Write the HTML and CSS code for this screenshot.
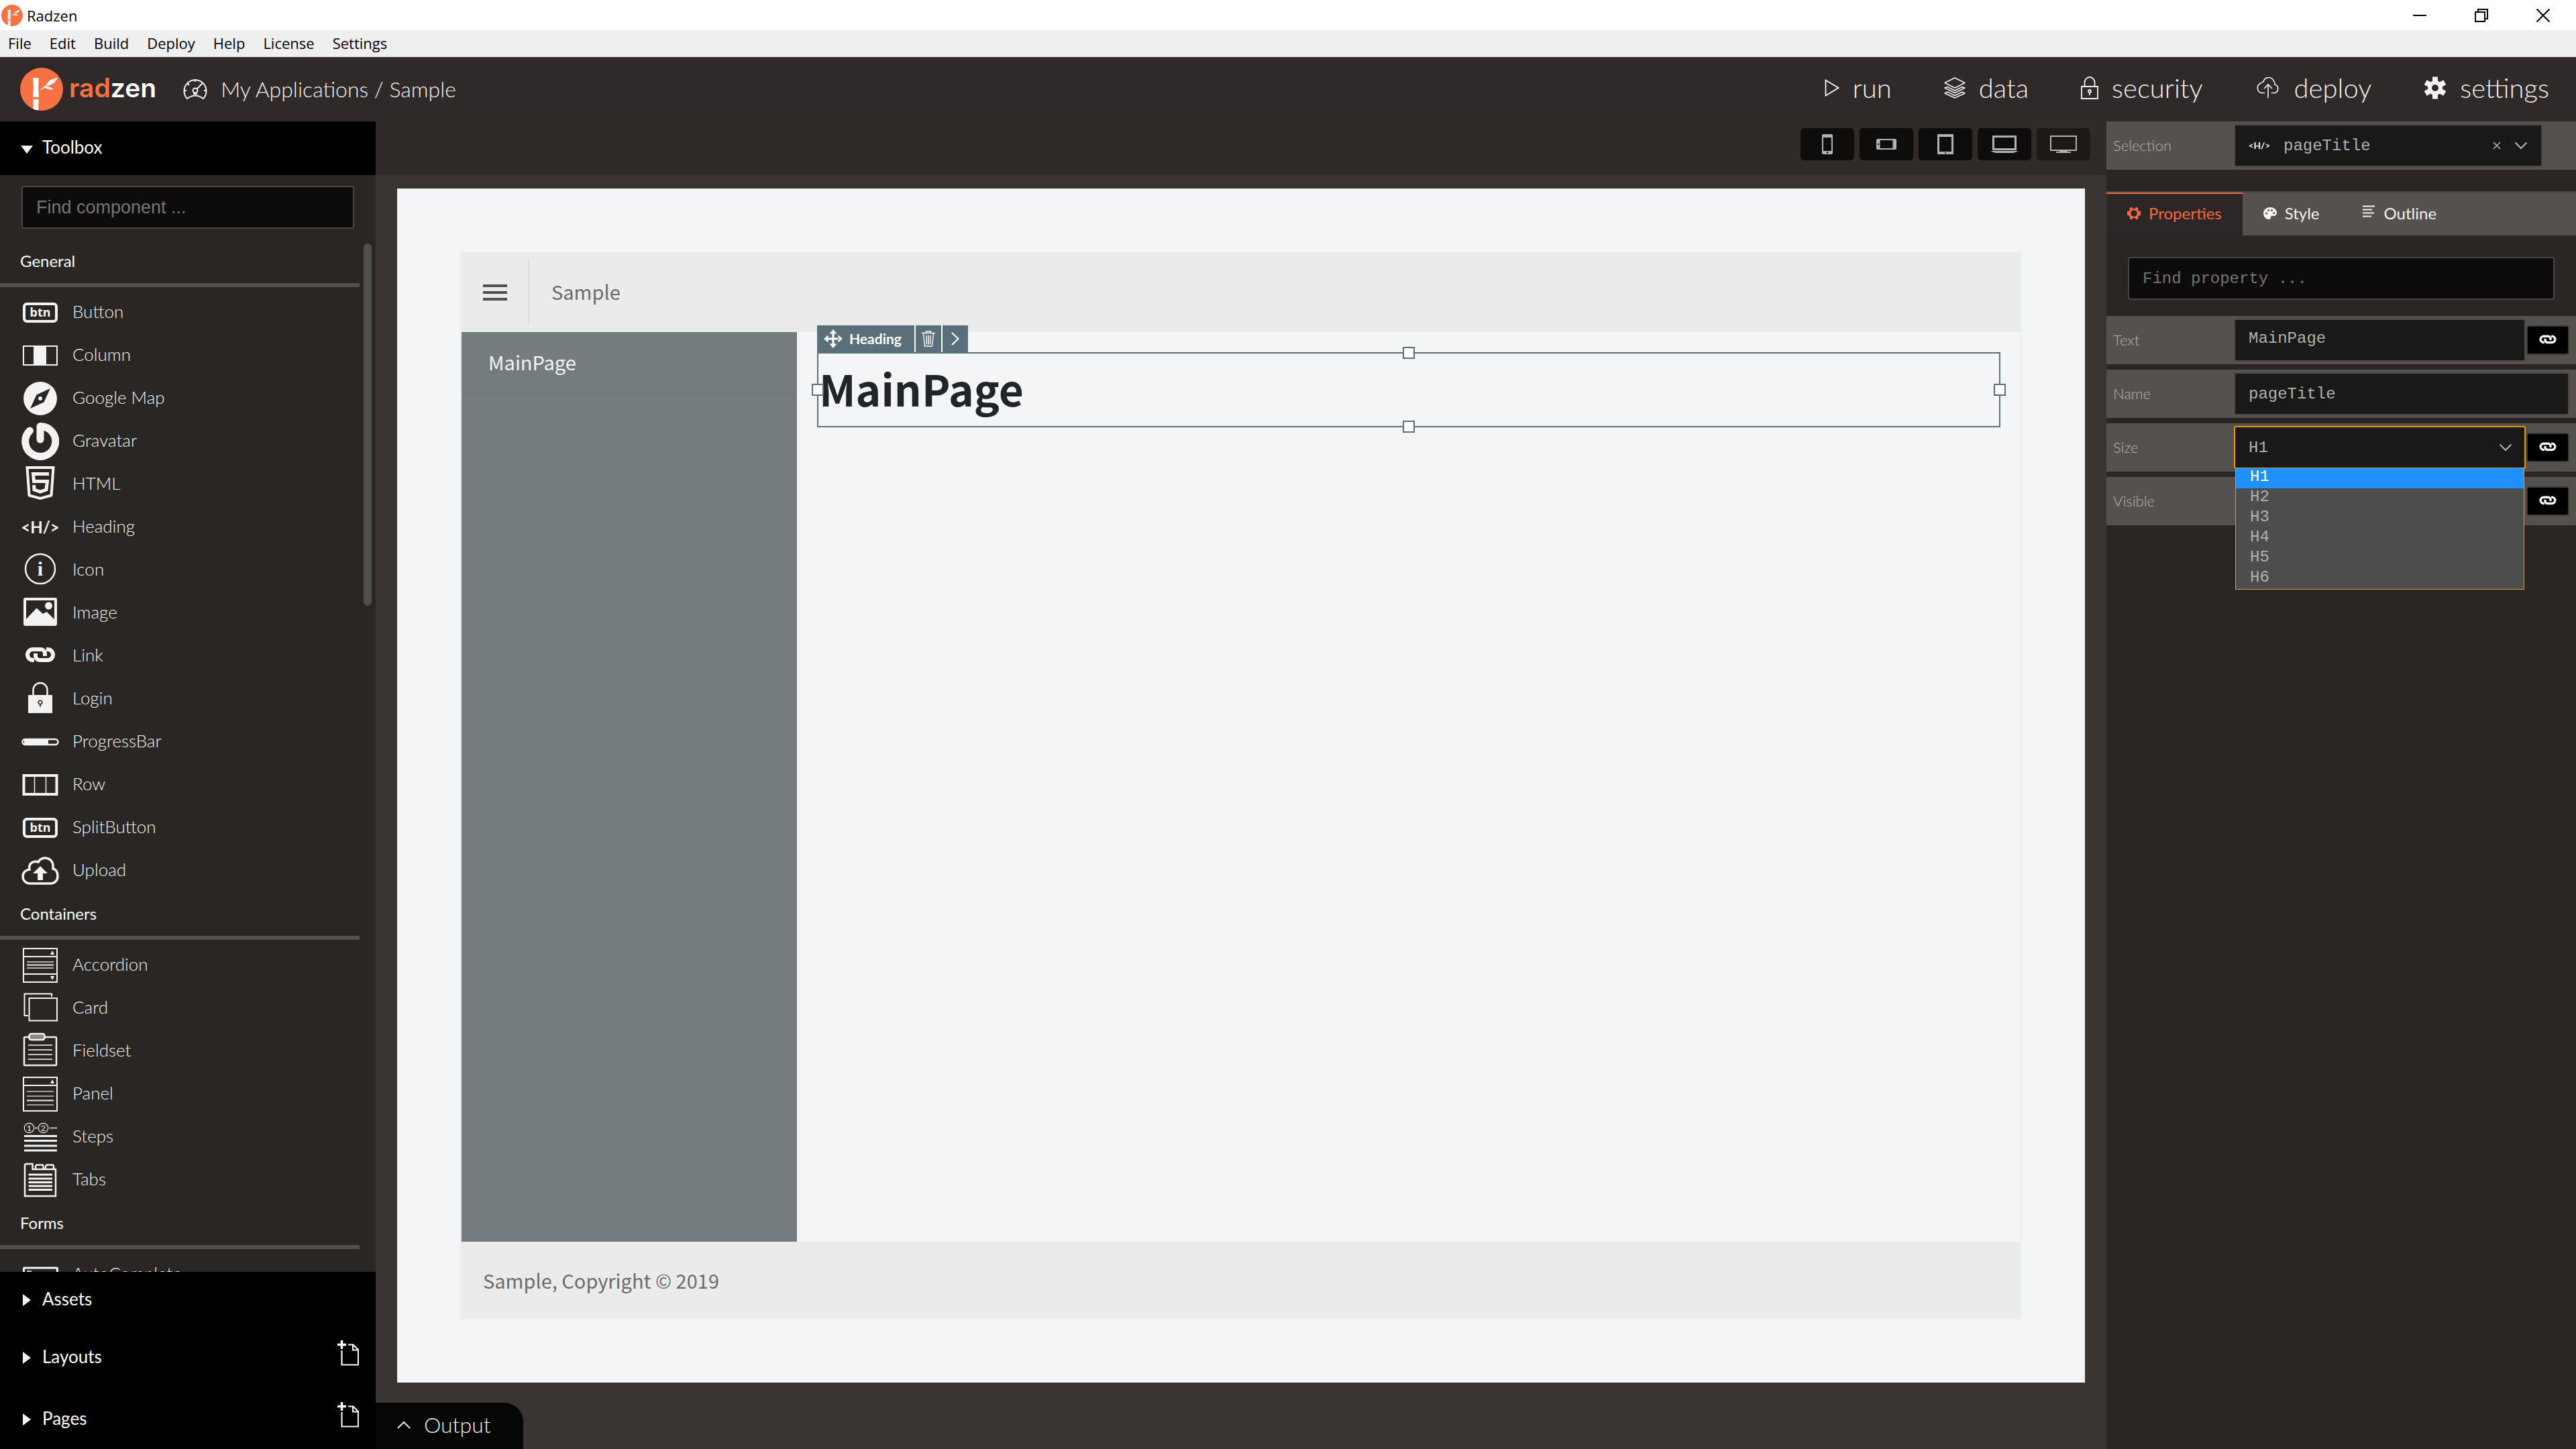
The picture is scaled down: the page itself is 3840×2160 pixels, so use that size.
FILE: index.html
```html
<!DOCTYPE html>
<html lang="en">
<head>
<meta charset="utf-8">
<title>Radzen</title>
<link rel="stylesheet" href="styles.css">
</head>
<body>
<svg class="defs" aria-hidden="true">
  <symbol id="logo" viewBox="0 0 64 64">
    <circle cx="32" cy="32" r="32" fill="#f77144"/>
    <path d="M19 15h9c-1 6-1 22 0 29h-9c1-7 1-23 0-29zM19 47h9c-1 5-1 11-.5 16.500q-4.500-.5-8-2c.5-5 .3-10-.5-14.500z" fill="#fff"/>
    <path d="M29 35C32 31 35 28 39 26C41 20 47 16 56 15C53 21 48 26 40 27C37 29 33 32 29 35ZM35 28C41 27 46 29 50 32C45 33.500 39 32 35 28Z" fill="#fff"/>
  </symbol>
  <symbol id="gauge" viewBox="0 0 36 32"><g fill="none" stroke="#f3f3f3" stroke-width="2"><path d="M6 30A16.500 16.500 0 1 1 30 30Q18 21 6 30Z"/><circle cx="18" cy="18" r="3.500"/><path d="M20.500 15.500L29 7M18 1v4M1 18h4M31 18h4M6 7l3 3M15 23h6"/></g></symbol>
  <symbol id="play" viewBox="0 0 22 26"><path d="M1.500 1.500V24.500L20.500 13Z" fill="none" stroke="#f3f3f3" stroke-width="1.800"/></symbol>
  <symbol id="layers" viewBox="0 0 32 32"><g fill="none" stroke="#f3f3f3" stroke-width="1.500" stroke-linejoin="round"><path d="M16 1L31 8.500L16 16L1 8.500Z"/><path d="M5 14.500L1 16L16 23.500L31 16L27 14.500L16 20Z"/><path d="M5 22L1 24L16 31L31 24L27 22L16 27.500Z"/></g></symbol>
  <symbol id="lock" viewBox="0 0 26 34"><g fill="none" stroke="#f3f3f3" stroke-width="1.800"><path d="M1 15H25V33H1ZM5.500 15V9a7.500 8 0 0 1 15 0V15"/><circle cx="13" cy="22" r="2"/><path d="M13 24v4"/></g></symbol>
  <symbol id="cloudup" viewBox="0 0 38 32"><path d="M14 23.500H9A7.500 7.500 0 0 1 7.500 9.500A6 6 0 0 1 12 7A8 8 0 0 1 27 5Q29 7 29 11A6.500 6.500 0 0 1 29 23.500H24M19 31V11M13 17L19 11L25 17" fill="none" stroke="#f3f3f3" stroke-width="1.600"/></symbol>
  <symbol id="cog" viewBox="0 0 34 34"><path d="M17 6a11 11 0 1 0 .01 0zM17 12a5 5 0 1 1-.01 0z" fill="#f3f3f3" fill-rule="evenodd"/><path d="M17 .500V8M17 26v7.500M2.700 8.700L9.500 12.500M24.500 21.500l6.800 3.800M2.700 25.300l6.800-3.800M24.500 12.500l6.800-3.800" stroke="#f3f3f3" stroke-width="8"/></symbol>
  <symbol id="column" viewBox="0 0 56 56"><rect x="3" y="14" width="50" height="28" fill="none" stroke="#f3f3f3" stroke-width="2"/><path d="M18 14h19v28H18z" fill="#f3f3f3"/></symbol>
  <symbol id="map" viewBox="0 0 56 56"><circle cx="28" cy="28" r="25" fill="#f3f3f3"/><path d="M43 13L33.500 33.500L13 43L22.500 22.500Z" fill="#2b2623"/><circle cx="28" cy="28" r="3" fill="#f3f3f3"/></symbol>
  <symbol id="gravatar" viewBox="0 0 56 56"><path d="M28 25V5.500A22.500 22.500 0 1 1 12.400 12" fill="none" stroke="#f3f3f3" stroke-width="11" stroke-linecap="round" stroke-linejoin="round"/></symbol>
  <symbol id="html" viewBox="0 0 56 56"><g fill="none" stroke="#f3f3f3"><path d="M8.500 3H47.500L44.500 44.500L28 49L11.500 44.500Z" stroke-width="4"/><path d="M41 12.500H17.500L18.500 23.500H38.500L37 36L28 39L19 36L18.500 29" stroke-width="5"/></g></symbol>
  <symbol id="image" viewBox="0 0 56 56"><rect x="5" y="7" width="46" height="38" rx="1" fill="none" stroke="#f3f3f3" stroke-width="4"/><path d="M6 38L22.500 20.500L32 29L37.500 26L50 38V45H6Z" fill="#f3f3f3"/><circle cx="40.500" cy="17" r="5.500" fill="#f3f3f3"/></symbol>
  <symbol id="link" viewBox="0 0 56 56"><g fill="none" stroke="#f3f3f3" stroke-width="6"><path d="M19 34h-2a8 8 0 0 1 0-16h12a6 6 0 0 1 6 6v4"/><path d="M37 18h2a8 8 0 0 1 0 16H27a6 6 0 0 1-6-6v-4"/></g></symbol>
  <symbol id="login" viewBox="0 0 56 56"><path d="M10 22h36v27H10z" fill="#f3f3f3"/><path d="M17.500 22V14.500a10.500 10.500 0 0 1 21 0V22" fill="none" stroke="#f3f3f3" stroke-width="2.500"/><g fill="none" stroke="#2b2623" stroke-width="1.600"><circle cx="28" cy="33" r="2.800"/><path d="M28 36v4"/></g></symbol>
  <symbol id="progress" viewBox="0 0 56 56"><rect x="1.500" y="24" width="53" height="8" rx="4" fill="none" stroke="#f3f3f3" stroke-width="2.500"/><path d="M4 25h36v6H4z" fill="#f3f3f3"/></symbol>
  <symbol id="row" viewBox="0 0 56 56"><rect x="3.500" y="14" width="49" height="28" fill="none" stroke="#f3f3f3" stroke-width="4"/><path d="M19.500 14v28M36.500 14v28" stroke="#f3f3f3" stroke-width="1.500"/></symbol>
  <symbol id="upload" viewBox="0 0 56 56"><path d="M13 47C5 47 2 41 2 36.500C2 31 6 27 12 26C10 18 17 12 25 15C28 10 33 8.500 36 9C44 10 48 16 47 25C52 26 54 31 54 36C54 42 50 47 43 47Z" fill="none" stroke="#f3f3f3" stroke-width="3.500"/><path d="M28 21L39 32H32V42H24V32H17Z" fill="#f3f3f3"/></symbol>
  <symbol id="accordion" viewBox="0 0 56 56"><rect x="3" y="3" width="50" height="50" fill="none" stroke="#f3f3f3" stroke-width="2"/><path d="M3 15h50M3 41h50M8 27.500h40" stroke="#f3f3f3" stroke-width="2"/><path d="M8 23h40M8 32h40" stroke="#b0aeac" stroke-width="2"/><path d="M46 6l3 6h-6zM46 50l3-6h-6z" fill="#f3f3f3"/></symbol>
  <symbol id="card" viewBox="0 0 56 56"><path d="M10 39H4.500V6.500H45V11M11.500 13H53V46.500H11.500Z" fill="none" stroke="#f3f3f3" stroke-width="2"/></symbol>
  <symbol id="fieldset" viewBox="0 0 56 56"><rect x="4" y="7" width="48" height="42" rx="1" fill="none" stroke="#f3f3f3" stroke-width="2.500"/><rect x="11.500" y="2" width="23" height="9" rx="3" fill="#8b8785" stroke="#f3f3f3" stroke-width="2.500"/><path d="M10 19h36M10 26h36M10 33h36M10 40h36" stroke="#c8c6c4" stroke-width="2"/></symbol>
  <symbol id="panel" viewBox="0 0 56 56"><rect x="3" y="3" width="50" height="50" fill="none" stroke="#f3f3f3" stroke-width="2"/><path d="M3 15h50M8 37.500h40" stroke="#f3f3f3" stroke-width="2"/><path d="M8 24h40M8 31h40M8 44h40" stroke="#c8c6c4" stroke-width="1.500"/><path d="M46 6l3 6h-6z" fill="#f3f3f3"/></symbol>
  <symbol id="tabs" viewBox="0 0 56 56"><path d="M5 52V5.500L6.500 4H16.500V12H51V52ZM21 12V7.500L22.500 5.500H31.500L32.500 7.500V12M36 12V7.500L37.500 5.500H47L48 7.500V12" fill="none" stroke="#f3f3f3" stroke-width="2.500"/><path d="M10.500 20H46M10.500 26H46M10.500 31.500H46M10.500 37H46M10.500 42.500H46" stroke="#f3f3f3" stroke-width="3"/></symbol>
  <symbol id="autocomplete" viewBox="0 0 56 56"><rect x="3.500" y="18" width="50" height="24" rx="1" fill="none" stroke="#f3f3f3" stroke-width="3"/><path d="M8 23h7M11.500 23v12" stroke="#f3f3f3" stroke-width="1.500"/></symbol>
  <symbol id="newpage" viewBox="0 0 32 38"><path d="M6.500 15V36.500H31V14L23.500 6.500H16M23 7V14.500H31" fill="none" stroke="#f3f3f3" stroke-width="2.200"/><path d="M0 6.500h13M6.500 0v13" stroke="#fff" stroke-width="3.500"/></symbol>
  <symbol id="phone" viewBox="0 0 16 30"><path d="M2 0H14Q16 0 16 2V28Q16 30 14 30H2Q0 30 0 28V2Q0 0 2 0ZM2 5V25H14V5Z" fill="#b3b2b0" fill-rule="evenodd"/><circle cx="8" cy="27.500" r="1.200" fill="#0e0d0b"/></symbol>
  <symbol id="phone-h" viewBox="0 0 30 16"><path d="M2 0H28Q30 0 30 2V14Q30 16 28 16H2Q0 16 0 14V2Q0 0 2 0ZM5.500 2V14H24.500V2Z" fill="#b3b2b0" fill-rule="evenodd"/><circle cx="3" cy="8" r="1.200" fill="#0e0d0b"/></symbol>
  <symbol id="tablet" viewBox="0 0 24 30"><path d="M0 0H24V30H0ZM3 4V26H21V4Z" fill="#b3b2b0" fill-rule="evenodd"/><circle cx="12" cy="28" r="1" fill="#0e0d0b"/></symbol>
  <symbol id="laptop" viewBox="0 0 42 26"><path d="M3 0H39V22H3ZM6 3V19H36V3ZM0 23H42Q38 25 34 26H8Q4 25 0 23Z" fill="#b3b2b0" fill-rule="evenodd"/></symbol>
  <symbol id="monitor" viewBox="0 0 40 26"><path d="M0 0H40V23H0ZM2 2V21H38V2ZM14 23H26V24H31V26H9V24H14Z" fill="#b3b2b0" fill-rule="evenodd"/></symbol>
  <symbol id="gear" viewBox="0 0 20 20"><path d="M7 0.500L8 3H12L13 0.500L16.500 2L16 5L17 6.500L20 7V13L17 13.500L16 15L16.500 18L13 19.500L12 17H8L7 19.500L3.500 18L4 15L3 13.500L0 13V7L3 6.500L4 5L3.500 2ZM10 5.200A4.800 4.800 0 1 0 10.010 5.200Z" fill="#ff6b40" fill-rule="evenodd"/></symbol>
  <symbol id="palette" viewBox="0 0 20 20"><path d="M10 1C4 1 0 5 0 10C0 15 4 19 8 19C11 19 11 17 11 15.500C11 14 12 13.500 14 14C18 14.500 20 12 20 9C20 4.500 16 1 10 1Z" fill="#f3f3f3"/><g fill="#55514f"><circle cx="4.500" cy="10" r="1.500"/><circle cx="7.500" cy="5.500" r="1.500"/><circle cx="12.500" cy="5.500" r="1.500"/><circle cx="16" cy="9.500" r="1.500"/></g></symbol>
  <symbol id="outline" viewBox="0 0 18 18"><path d="M0 1.500H18M0 6.500H14M0 11.500H17M0 16.500H13" stroke="#f3f3f3" stroke-width="2"/></symbol>
  <symbol id="chev-down" viewBox="0 0 20 12"><path d="M1.500 1.500L10 10L18.500 1.500" fill="none" stroke="#b5b5b5" stroke-width="2"/></symbol>
  <symbol id="chev-up" viewBox="0 0 20 12"><path d="M1 11L10 2L19 11" fill="none" stroke="#e8e8e8" stroke-width="2"/></symbol>
  <symbol id="cross" viewBox="0 0 12 12"><path d="M1 1L11 11M11 1L1 11" fill="none" stroke="#b5b5b5" stroke-width="1.500"/></symbol>
  <symbol id="move" viewBox="0 0 28 28"><path d="M14 0L19.500 6.500H8.500ZM14 28L8.500 21.500H19.500ZM0 14L6.500 8.500V19.500ZM28 14L21.500 8.500V19.500ZM12.500 5h3V23h-3ZM5 12.500H23v3H5Z" fill="#fff"/></symbol>
  <symbol id="trash" viewBox="0 0 20 24"><path d="M0 3.500H20M6.500 3V1H13.500V3M2.500 4L4.500 23H15.500L17.500 4M7 7L7.500 20.500M10 7V20.500M13 7L12.500 20.500" fill="none" stroke="#fff" stroke-width="1.400"/></symbol>
  <symbol id="chev-right" viewBox="0 0 12 20"><path d="M1 1L10.500 10L1 19" fill="none" stroke="#fff" stroke-width="2.200"/></symbol>
  <symbol id="burger" viewBox="0 0 36 24"><path d="M0 2H36M0 12H36M0 22H36" stroke="#4f4f4f" stroke-width="4"/></symbol>
  <symbol id="min" viewBox="0 0 20 20"><path d="M0 10H20" stroke="#000" stroke-width="2"/></symbol>
  <symbol id="restore" viewBox="0 0 20 20"><path d="M1 5H15V19H1ZM5 5V1H19V15H15" fill="none" stroke="#000" stroke-width="2"/></symbol>
  <symbol id="close" viewBox="0 0 20 20"><path d="M.500 .500L19.500 19.500M19.500 .500L.500 19.500" stroke="#000" stroke-width="2"/></symbol>
</svg>

<div class="app">
  <div class="titlebar">
    <svg class="i32"><use href="#logo"/></svg>
    <span class="titlebar-name">Radzen</span>
    <div class="window-buttons">
      <button aria-label="Minimize"><svg class="i20"><use href="#min"/></svg></button>
      <button aria-label="Restore"><svg class="i20"><use href="#restore"/></svg></button>
      <button aria-label="Close"><svg class="i20"><use href="#close"/></svg></button>
    </div>
  </div>
  <nav class="menubar">
    <button>File</button><button>Edit</button><button>Build</button><button>Deploy</button><button>Help</button><button>License</button><button>Settings</button>
  </nav>
  <header class="header">
    <a class="brand" href="#"><svg class="i64"><use href="#logo"/></svg><span class="brand-name"><b>rad</b>zen</span></a>
    <a class="crumbs" href="#"><svg class="gauge"><use href="#gauge"/></svg><span>My Applications / Sample</span></a>
    <nav class="actions">
      <button><svg width="22" height="26"><use href="#play"/></svg>run</button>
      <button><svg width="32" height="32"><use href="#layers"/></svg>data</button>
      <button><svg width="26" height="34"><use href="#lock"/></svg>security</button>
      <button><svg width="38" height="32"><use href="#cloudup"/></svg>deploy</button>
      <button><svg width="34" height="34"><use href="#cog"/></svg>settings</button>
    </nav>
  </header>

  <div class="body">
    <aside class="sidebar">
      <button class="accordion-head open"><i class="tri-down"></i><span>Toolbox</span></button>
      <div class="find"><input class="find-input" type="text" placeholder="Find component ..." aria-label="Find component"></div>
      <div class="tools">
        <i class="thumb"></i>
        <h2>General</h2>
        <ul>
          <li><svg class="i56" viewBox="0 0 56 56"><rect x="4" y="15" width="48" height="26" rx="4" fill="none" stroke="#f3f3f3" stroke-width="4"/><text x="28" y="34" text-anchor="middle" class="glyph-btn">btn</text></svg><span>Button</span></li>
          <li><svg class="i56"><use href="#column"/></svg><span>Column</span></li>
          <li><svg class="i56"><use href="#map"/></svg><span>Google Map</span></li>
          <li><svg class="i56"><use href="#gravatar"/></svg><span>Gravatar</span></li>
          <li><svg class="i56"><use href="#html"/></svg><span>HTML</span></li>
          <li><svg class="i56" viewBox="0 0 56 56"><text x="28" y="37" text-anchor="middle" class="glyph-h">&lt;H/&gt;</text></svg><span>Heading</span></li>
          <li><svg class="i56" viewBox="0 0 56 56"><circle cx="28" cy="26" r="22" fill="none" stroke="#f3f3f3" stroke-width="2.500"/><text x="28" y="36" text-anchor="middle" class="glyph-i">i</text></svg><span>Icon</span></li>
          <li><svg class="i56"><use href="#image"/></svg><span>Image</span></li>
          <li><svg class="i56"><use href="#link"/></svg><span>Link</span></li>
          <li><svg class="i56"><use href="#login"/></svg><span>Login</span></li>
          <li><svg class="i56"><use href="#progress"/></svg><span>ProgressBar</span></li>
          <li><svg class="i56"><use href="#row"/></svg><span>Row</span></li>
          <li><svg class="i56" viewBox="0 0 56 56"><rect x="4" y="15" width="48" height="26" rx="4" fill="none" stroke="#f3f3f3" stroke-width="4"/><text x="28" y="34" text-anchor="middle" class="glyph-btn">btn</text></svg><span>SplitButton</span></li>
          <li><svg class="i56"><use href="#upload"/></svg><span>Upload</span></li>
        </ul>
        <h2>Containers</h2>
        <ul>
          <li><svg class="i56"><use href="#accordion"/></svg><span>Accordion</span></li>
          <li><svg class="i56"><use href="#card"/></svg><span>Card</span></li>
          <li><svg class="i56"><use href="#fieldset"/></svg><span>Fieldset</span></li>
          <li><svg class="i56"><use href="#panel"/></svg><span>Panel</span></li>
          <li><svg class="i56" viewBox="0 0 56 56"><g fill="none" stroke="#f3f3f3"><circle cx="11.500" cy="14.500" r="7.200" stroke-width="1.200"/><circle cx="32.500" cy="14.500" r="7.200" stroke-width="1.200"/><path d="M20 14.500h4M42 14.500h11" stroke-width="1.500"/><path d="M4 26.500h49M4 33.500h49M4 41h49M4 48h49" stroke-width="3"/></g><text x="11.500" y="19" text-anchor="middle" class="glyph-n">1</text><text x="32.500" y="19" text-anchor="middle" class="glyph-n">2</text></svg><span>Steps</span></li>
          <li><svg class="i56"><use href="#tabs"/></svg><span>Tabs</span></li>
        </ul>
        <h2>Forms</h2>
        <ul>
          <li><svg class="i56"><use href="#autocomplete"/></svg><span>AutoComplete</span></li>
        </ul>
      </div>
      <div class="accordion-row"><button class="accordion-head"><i class="tri-right"></i><span>Assets</span></button></div>
      <div class="accordion-row tall"><button class="accordion-head"><i class="tri-right"></i><span>Layouts</span></button><button class="add" aria-label="Add layout"><svg width="32" height="38"><use href="#newpage"/></svg></button></div>
      <div class="accordion-row tall"><button class="accordion-head"><i class="tri-right"></i><span>Pages</span></button><button class="add" aria-label="Add page"><svg width="32" height="38"><use href="#newpage"/></svg></button></div>
    </aside>

    <section class="workspace">
      <div class="devices">
        <button aria-label="Phone"><svg width="16" height="30"><use href="#phone"/></svg></button>
        <button aria-label="Phone landscape"><svg width="30" height="16"><use href="#phone-h"/></svg></button>
        <button aria-label="Tablet"><svg width="24" height="30"><use href="#tablet"/></svg></button>
        <button aria-label="Laptop"><svg width="42" height="26"><use href="#laptop"/></svg></button>
        <button aria-label="Desktop" class="current"><svg width="40" height="26"><use href="#monitor"/></svg></button>
      </div>
      <div class="stage-wrap">
        <div class="stage">
          <div class="page">
            <div class="page-head">
              <button class="burger" aria-label="Menu"><svg width="36" height="24"><use href="#burger"/></svg></button>
              <span class="page-name">Sample</span>
            </div>
            <div class="page-mid">
              <div class="page-nav"><a href="#">MainPage</a></div>
              <div class="page-main">
                <div class="selected">
                  <div class="sel-bar">
                    <button class="sel-type"><svg width="28" height="28"><use href="#move"/></svg>Heading</button>
                    <button class="sel-btn" aria-label="Delete"><svg width="20" height="24"><use href="#trash"/></svg></button>
                    <button class="sel-btn" aria-label="Next"><svg width="12" height="20"><use href="#chev-right"/></svg></button>
                  </div>
                  <h1>MainPage</h1>
                  <i class="handle n"></i><i class="handle e"></i><i class="handle s"></i><i class="handle w"></i>
                </div>
              </div>
            </div>
            <div class="page-foot">Sample, Copyright © 2019</div>
          </div>
        </div>
      </div>
      <button class="output"><svg width="20" height="12"><use href="#chev-up"/></svg>Output</button>
    </section>

    <aside class="inspector">
      <div class="prop">
        <label for="selection">Selection</label>
        <div class="field selection">
          <svg class="i32" viewBox="0 0 56 56"><text x="28" y="37" text-anchor="middle" class="glyph-h">&lt;H/&gt;</text></svg>
          <select id="selection"><option>pageTitle</option></select>
          <button aria-label="Clear"><svg width="12" height="12"><use href="#cross"/></svg></button>
          <svg width="20" height="12"><use href="#chev-down"/></svg>
        </div>
      </div>
      <div class="tabs" role="tablist">
        <button role="tab" class="active" aria-selected="true"><svg class="i20"><use href="#gear"/></svg>Properties</button>
        <button role="tab"><svg class="i20"><use href="#palette"/></svg>Style</button>
        <button role="tab"><svg class="i18"><use href="#outline"/></svg>Outline</button>
      </div>
      <div class="find-prop"><input class="find-input mono" type="text" placeholder="Find property ..." aria-label="Find property"></div>
      <div class="props">
        <div class="prop">
          <label for="p-text">Text</label>
          <textarea class="field" id="p-text" rows="1">MainPage</textarea>
          <button class="bind" aria-label="Bind text"><svg class="i32"><use href="#link"/></svg></button>
        </div>
        <div class="prop">
          <label for="p-name">Name</label>
          <input class="field" id="p-name" type="text" value="pageTitle">
        </div>
        <div class="prop">
          <label for="p-size">Size</label>
          <div class="field combo">
            <select id="p-size"><option>H1</option><option>H2</option><option>H3</option><option>H4</option><option>H5</option><option>H6</option></select>
            <svg width="20" height="12"><use href="#chev-down"/></svg>
            <ul class="popup" role="listbox">
              <li role="option" aria-selected="true">H1</li><li role="option">H2</li><li role="option">H3</li><li role="option">H4</li><li role="option">H5</li><li role="option">H6</li>
            </ul>
          </div>
          <button class="bind" aria-label="Bind size"><svg class="i32"><use href="#link"/></svg></button>
        </div>
        <div class="prop">
          <label for="p-visible">Visible</label>
          <div class="field check"><input id="p-visible" type="checkbox" checked></div>
          <button class="bind" aria-label="Bind visible"><svg class="i32"><use href="#link"/></svg></button>
        </div>
      </div>
    </aside>
  </div>
</div>
</body>
</html>
```
FILE: styles.css
```css
* { box-sizing: border-box; }
body { margin: 0; background: #3a3532; color: #f3f3f3; font-family: Lato, sans-serif; font-size: 26px; line-height: 32px; }
button { border: 0; padding: 0; margin: 0; background: none; color: inherit; font: inherit; display: flex; align-items: center; }
a { color: inherit; text-decoration: none; }
ul { list-style: none; margin: 0; padding: 0; }
svg { display: block; flex: none; }
input, select, textarea { font: inherit; color: inherit; margin: 0; outline: 0; }
.defs { display: none; }
.i18 { width: 18px; height: 18px; }
.i20 { width: 20px; height: 20px; }
.i32 { width: 32px; height: 32px; }
.i56 { width: 56px; height: 56px; }
.i64 { width: 64px; height: 64px; }
.glyph-btn { font: 700 18px "Noto Sans", sans-serif; fill: #f3f3f3; }
.glyph-h { font: 700 24px Lato, sans-serif; fill: #f3f3f3; }
.glyph-i { font: 700 30px "Liberation Serif", serif; fill: #f3f3f3; }
.glyph-n { font: 12px Lato, sans-serif; fill: #f3f3f3; }

/* Window chrome and header */
.app { display: flex; flex-direction: column; height: 100vh; min-height: 1400px; overflow: hidden; }
.titlebar { flex: none; display: flex; align-items: center; height: 45px; padding-left: 2px; gap: 6px; background: #fff; color: #000; font: 22px/32px "Open Sans", sans-serif; }
.window-buttons { display: flex; gap: 72px; margin-left: auto; padding-right: 39px; }
.menubar { flex: none; display: flex; align-items: center; gap: 27px; height: 40px; padding: 0 12px 2px; background: #efefef; color: #000; font: 22px/32px "Open Sans", sans-serif; }
.header { flex: none; display: flex; align-items: center; height: 96px; padding: 0 40px 0 30px; background: #2f2929; }
.brand { display: flex; align-items: center; gap: 9px; font: 600 39px/48px Inter, sans-serif; color: #fff; }
.brand b { font-weight: 600; color: #f77144; }
.brand-name { padding-bottom: 4px; }
.crumbs { display: flex; align-items: center; gap: 20px; margin-left: 40px; font-size: 32px; line-height: 40px; font-weight: 300; }
.gauge { width: 36px; height: 32px; }
.actions { display: flex; gap: 78px; margin-left: auto; padding-bottom: 4px; font-size: 40px; line-height: 48px; font-weight: 300; }
.actions button { gap: 20px; }

/* Toolbox */
.body { flex: 1; min-height: 0; display: flex; }
.sidebar { flex: none; width: 560px; display: flex; flex-direction: column; background: #2a2623; }
.accordion-head { flex: 1; height: 100%; gap: 14px; padding-left: 31px; color: #fff; }
.accordion-head.open { flex: none; height: 80px; padding-bottom: 4px; background: #000; }
.tri-down, .tri-right { margin-top: 4px; border: 9px solid transparent; }
.tri-down { border-top: 12px solid #f3f3f3; border-bottom: 0; margin-top: 8px; }
.tri-right { border-left: 12px solid #f3f3f3; border-right: 0; margin-left: 3px; margin-right: 3px; }
.find { flex: none; padding: 16px 32px; }
.find-input { display: block; width: 100%; height: 64px; padding: 0 20px; border: 2px solid #454545; border-radius: 4px; background: #0d0b0b; font: 27px/32px "Liberation Sans", sans-serif; }
.find-input::placeholder { color: #757575; opacity: 1; }
.tools { position: relative; flex: 1; min-height: 0; overflow: hidden; }
.tools h2 { margin: 0 24px 6px 0; height: 71px; padding: 16px 0 0 30px; border-bottom: 6px solid #54504e; font-size: 24px; line-height: 32px; font-weight: 400; color: #fff; }
.tools li { display: flex; align-items: center; gap: 20px; height: 64px; padding-left: 32px; font-weight: 300; }
.tools li span { padding-bottom: 4px; }
.thumb { position: absolute; top: 6px; right: 6px; width: 12px; height: 540px; border-radius: 6px; background: #4f4f4f; }
.accordion-row { flex: none; display: flex; align-items: center; height: 80px; background: #000; }
.accordion-row.tall { height: 92px; }
.add { padding: 0 25px 10px 0; }

/* Design surface */
.workspace { flex: 1; min-width: 0; display: flex; flex-direction: column; }
.devices { flex: none; display: flex; justify-content: flex-end; gap: 8px; height: 80px; padding: 10px 24px; background: #302b28; }
.devices button { justify-content: center; width: 80px; height: 48px; border-radius: 5px; background: #0e0d0b; }
.devices .current { background: #1c1917; }
.stage-wrap { flex: 1; min-height: 0; display: flex; padding: 20px 32px 30px; }
.stage { flex: 1; display: flex; padding: 94px; background: #f4f5f7; }
.page { flex: 1; display: flex; flex-direction: column; border: 2px solid #eceef0; color: #6b6b6b; font: 29px/36px "Noto Sans CJK SC", sans-serif; }
.page-head { flex: none; display: flex; align-items: center; height: 118px; background: #ebebeb; }
.burger { width: 101px; height: 100px; justify-content: center; border-right: 2px solid #e0e0e0; }
.page-name { padding: 0 0 4px 33px; }
.page-mid { flex: 1; display: flex; }
.page-nav { width: 500px; background: #747c7f; color: #f3f3f3; }
.page-nav a { display: block; height: 92px; padding: 26px 40px; border-bottom: 2px solid #77777b; }
.page-main { flex: 1; padding: 30px; }
.selected { position: relative; height: 112px; border: 2px solid #5a6f7a; }
.selected h1 { margin: 0; padding-left: 1px; font-size: 64px; line-height: 102px; color: #212529; }
.sel-bar { position: absolute; left: -2px; top: -42px; display: flex; gap: 2px; font: 700 21px/40px Lato, sans-serif; color: #fff; background: #fff; }
.sel-type, .sel-btn { height: 40px; background: #5a6f7a; }
.sel-type { width: 145px; padding-left: 10px; gap: 10px; }
.sel-btn { width: 38px; justify-content: center; }
.handle { position: absolute; width: 18px; height: 18px; border: 2px solid #5a6f7a; background: #fff; transform: translate(-50%, -50%); }
.n { left: 50%; top: -1px; }
.e { left: calc(100% + 1px); top: 50%; }
.s { left: 50%; top: calc(100% + 1px); }
.w { left: -1px; top: 50%; }
.page-foot { flex: none; display: flex; align-items: center; height: 114px; padding-left: 32px; background: #ebebeb; }
.output { flex: none; align-self: flex-start; width: 220px; height: 69px; padding: 0 0 4px 32px; gap: 20px; border-radius: 0 28px 0 0; background: #060606; font-size: 32px; font-weight: 300; }

/* Property inspector */
.inspector { flex: none; width: 700px; background: #2b2623; }
.prop { display: flex; align-items: center; height: 72px; padding: 0 10px; background: #55514e; }
.prop label { width: 180px; color: #b8b6b4; font-size: 22px; font-weight: 300; }
.prop select { flex: 1; min-width: 0; appearance: none; border: 0; padding: 2px 0 0; background: none; }
.field { flex: 1; min-width: 0; height: 64px; padding: 0 20px; border: 2px solid #4a4a4a; border-radius: 3px; background: #191919; color: #b0b0b0; font: 24px/32px "Liberation Mono", monospace; resize: none; }
textarea.field { padding: 12px 20px; overflow: hidden; }
.selection { display: flex; align-items: center; gap: 20px; margin-right: 40px; border-radius: 0; }
.find-prop { padding: 32px 32px 24px; }
.mono { font: 24px/32px "Liberation Mono", monospace; }
.tabs { display: flex; height: 66px; margin-top: 32px; border-top: 2px solid #484645; background: #55514f; font-size: 24px; }
.tabs button { gap: 12px; padding: 0 31px 2px; }
.tabs .i18 { margin: 0 2px 6px; }
.tabs .active { background: #2c2626; border-top: 2px solid #ff6b40; color: #ff6b40; padding-bottom: 4px; }
.props { display: flex; flex-direction: column; gap: 8px; }
.bind { justify-content: center; width: 64px; height: 44px; margin-left: 1px; border: 2px solid #3d3b3a; border-radius: 4px; background: #000; }
.combo { position: relative; display: flex; align-items: center; padding: 0 18px 0 20px; border-color: #e69700; }
.popup { position: absolute; left: 0; right: 0; top: 60px; border: 1px solid #d5a13c; background: #4d4d4d; }
.popup li { height: 30px; padding-left: 21px; line-height: 26px; }
.popup [aria-selected] { background: #1e90ff; color: #fff; }
.check { border-color: #55514e; background: none; }
```
